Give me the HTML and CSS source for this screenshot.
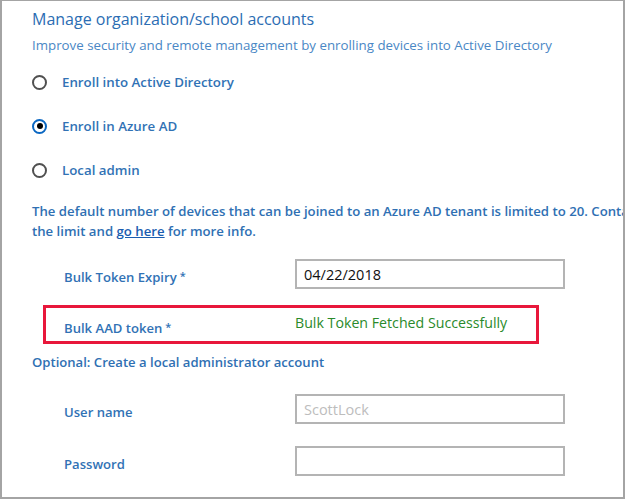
FILE: index.html
```html
<!DOCTYPE html>
<html lang="en">
<head>
<meta charset="utf-8">
<title>Manage organization/school accounts</title>
<link rel="stylesheet" href="styles.css">
</head>
<body>
<div class="frame">
  <h1 class="title">Manage organization/school accounts</h1>
  <p class="subtitle">Improve security and remote management by enrolling devices into Active Directory</p>

  <div class="radios">
    <label class="radio"><span class="ring"></span><span class="radio-label">Enroll into Active Directory</span></label>
    <label class="radio"><span class="ring ring-on"><span class="pip"></span></span><span class="radio-label">Enroll in Azure AD</span></label>
    <label class="radio"><span class="ring"></span><span class="radio-label">Local admin</span></label>
  </div>

  <p class="note">The default number of devices that can be joined to an Azure AD tenant is limited to 20. Contact your administrator to increase<br>the limit and <a class="link" href="#">go here</a> for more info.</p>

  <div class="field">
    <span class="field-label">Bulk Token Expiry<span class="req">*</span></span>
    <div class="input"><span class="value">04/22/2018</span></div>
  </div>

  <div class="token-box">
    <span class="field-label">Bulk AAD token<span class="req">*</span></span>
    <span class="status">Bulk Token Fetched Successfully</span>
  </div>

  <p class="section">Optional: Create a local administrator account</p>

  <div class="field field-user">
    <span class="field-label">User name</span>
    <div class="input"><span class="placeholder">ScottLock</span></div>
  </div>

  <div class="field field-pass">
    <span class="field-label">Password</span>
    <div class="input"></div>
  </div>
</div>
</body>
</html>
```

FILE: styles.css
```css
html, body {
  margin: 0;
  padding: 0;
  background: #ffffff;
}

.frame {
  box-sizing: border-box;
  width: 625px;
  height: 499px;
  border: 2px solid #a4a4a4;
  border-top-width: 1px;
  padding: 8px 0 0 30px;
  overflow: hidden;
  font-family: "Open Sans", "Noto Sans", sans-serif;
  color: #2f70b3;
}

.title {
  margin: 0;
  font-size: 16px;
  line-height: 20px;
  font-weight: 400;
  color: #2b6db3;
  white-space: nowrap;
}

.subtitle {
  margin: 6px 0 0;
  font-size: 13.3px;
  line-height: 20px;
  color: #4a87c5;
  white-space: nowrap;
}

.radios {
  display: flex;
  flex-direction: column;
  gap: 20px;
  margin-top: 15px;
}

.radio {
  display: flex;
  align-items: center;
  height: 24px;
  gap: 15px;
}

.ring {
  box-sizing: border-box;
  width: 15px;
  height: 15px;
  border: 2px solid #505050;
  border-radius: 50%;
  display: flex;
  align-items: center;
  justify-content: center;
  flex: none;
}

.ring-on {
  border-color: #0a67c2;
}

.pip {
  width: 6px;
  height: 6px;
  border-radius: 50%;
  background: #000000;
}

.radio-label {
  font-size: 13.3px;
  font-weight: 600;
  color: #3172b5;
  line-height: 20px;
}

.note {
  margin: 19px 0 0;
  font-size: 13.2px;
  line-height: 20px;
  font-weight: 600;
  color: #2f70b3;
  white-space: nowrap;
}

.link {
  color: #1a5db0;
  text-decoration: underline;
}

.field {
  display: flex;
  align-items: flex-start;
  margin-top: 18px;
  padding-left: 32px;
}

.field-label {
  width: 231px;
  flex: none;
  margin-top: 8px;
  font-size: 13.1px;
  line-height: 20px;
  font-weight: 600;
  color: #3172b5;
  white-space: nowrap;
}

.req {
  font-size: 11px;
  margin-left: 3px;
  position: relative;
  top: -2px;
}

.input {
  box-sizing: border-box;
  width: 270px;
  height: 30px;
  border: 2px solid #b4b4b4;
  display: flex;
  align-items: center;
  padding-left: 7px;
  font-size: 14.5px;
}

.value {
  color: #111111;
}

.placeholder {
  color: #bdbdbd;
}

.token-box {
  box-sizing: border-box;
  display: flex;
  align-items: flex-start;
  width: 496px;
  height: 39px;
  margin: 16px 0 0 11px;
  border: 3px solid #e8173b;
  padding-left: 18px;
}

.token-box .field-label {
  margin-top: 10px;
}

.status {
  margin-top: 5px;
  font-size: 14.2px;
  line-height: 20px;
  color: #2a8a2a;
  white-space: nowrap;
}

.section {
  margin: 8px 0 0;
  font-size: 13.1px;
  line-height: 20px;
  font-weight: 600;
  color: #2f70b3;
}

.field-user {
  margin-top: 22px;
}

.field-pass {
  margin-top: 22px;
}
```
